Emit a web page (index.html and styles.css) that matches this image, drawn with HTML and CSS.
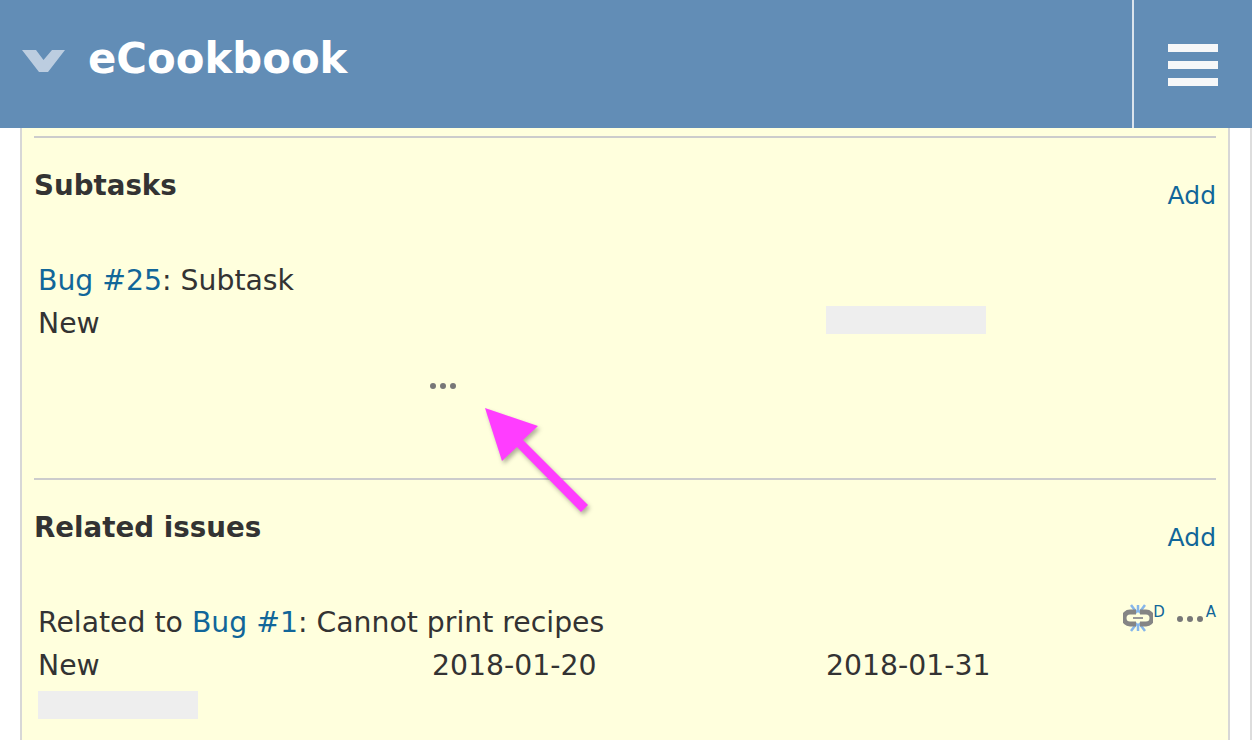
FILE: index.html
```html
<!DOCTYPE html>
<html lang="en">
<head>
  <meta charset="UTF-8" />
  <title>eCookbook</title>
  <link rel="stylesheet" href="styles.css">
</head>
<body>

<header class="top-bar">
  <div class="brand">
    <svg class="chevron" width="44" height="22" viewBox="0 0 44 22">
      <polygon points="0,0 14,0 21.5,10 30,0 43,0 26,22 17,22" fill="#bccde0"/>
    </svg>
    <h1>eCookbook</h1>
  </div>
  <a class="menu-btn" href="#">
    <span></span>
    <span></span>
    <span></span>
  </a>
</header>

<div class="page">
  <main class="issue">
    <section class="block subtasks">
      <div class="block-head">
        <h3>Subtasks</h3>
        <a class="add" href="#">Add</a>
      </div>
      <div class="line"><a href="#">Bug #25</a>: Subtask</div>
      <div class="cols">
        <div>New</div>
        <div></div>
        <div><span class="blank"></span></div>
      </div>
      <div class="cols more-row">
        <div></div>
        <div>
          <svg class="dots" width="28" height="8" viewBox="0 0 28 8">
            <circle cx="4" cy="4" r="3" fill="#777"/>
            <circle cx="14" cy="4" r="3" fill="#777"/>
            <circle cx="24" cy="4" r="3" fill="#777"/>
          </svg>
        </div>
      </div>
    </section>

    <section class="block">
      <div class="block-head">
        <h3>Related issues</h3>
        <a class="add" href="#">Add</a>
      </div>
      <div class="line-wrap">
        <div class="line">Related to <a href="#">Bug #1</a>: Cannot print recipes</div>
        <div class="row-tools">
          <svg class="unlink" width="30" height="28" viewBox="0 0 30 28">
            <path d="M8 1l6 8M22 1l-6 8M8 27l6-8M22 27l-6-8M15 1v7M15 27v-7" stroke="#86b6ea" stroke-width="2.5" fill="none"/>
            <path d="M13 8H7a6 6 0 0 0 0 12h6M17 8h6a6 6 0 0 1 0 12h-6" stroke="#858585" stroke-width="5" fill="none"/>
            <path d="M10 14h10" stroke="#999" stroke-width="2" fill="none"/>
          </svg>
          <a class="tool-letter" href="#">D</a>
          <svg class="tool-dots" width="28" height="8" viewBox="0 0 28 8">
            <circle cx="4" cy="4" r="3" fill="#777"/>
            <circle cx="14" cy="4" r="3" fill="#777"/>
            <circle cx="24" cy="4" r="3" fill="#777"/>
          </svg>
          <a class="tool-letter" href="#">A</a>
        </div>
      </div>
      <div class="cols">
        <div>New</div>
        <div>2018-01-20</div>
        <div>2018-01-31</div>
      </div>
      <div class="blank-row"><span class="blank"></span></div>
    </section>
  </main>
</div>

<svg class="arrow" width="120" height="120" viewBox="0 0 120 120">
  <polygon points="5,8 58,26 43,40 108,105 101,112 37,47 22,61" fill="#ff3dff"/>
</svg>

</body>
</html>
```

FILE: styles.css
```css
body {
  margin: 0;
  height: 740px;
  overflow: hidden;
  background: #fff;
  color: #333;
  font-family: 'DejaVu Sans', sans-serif;
  font-size: 28.3px;
}

a {
  color: #169;
  text-decoration: none;
}

.top-bar {
  display: flex;
  justify-content: space-between;
  height: 128px;
  background: #628db6;
}

.brand {
  display: flex;
  align-items: flex-start;
  padding-left: 22px;
}

.chevron {
  margin-top: 50px;
}

.brand h1 {
  margin: 33px 0 0 22px;
  color: #fff;
  font-size: 41.8px;
  line-height: 52px;
  font-weight: bold;
}

.menu-btn {
  display: flex;
  flex-direction: column;
  gap: 9px;
  box-sizing: border-box;
  width: 120px;
  padding: 44px 34px 0 34px;
  border-left: 2px solid #dbe4ed;
}

.menu-btn span {
  display: block;
  height: 8px;
  background: #f6f7f8;
}

.page {
  padding: 0 20px;
  border-right: 2px solid #ddd;
}

.issue {
  box-sizing: border-box;
  height: 612px;
  padding: 8px 12px 0 12px;
  background: #ffd;
  border-left: 2px solid #d7d7d7;
  border-right: 2px solid #d7d7d7;
}

.block {
  border-top: 2px solid #ccc;
}

.subtasks {
  height: 340px;
}

.block-head {
  display: flex;
  justify-content: space-between;
  height: 121px;
}

.block-head h3 {
  margin: 29px 0 0 0;
  font-size: 27.7px;
  line-height: 38px;
  font-weight: bold;
}

.add {
  margin-top: 39px;
  font-size: 25px;
  line-height: 38px;
}

.line {
  padding-left: 4px;
  line-height: 43px;
  height: 43px;
}

.line-wrap {
  display: flex;
  justify-content: space-between;
}

.cols {
  display: grid;
  grid-template-columns: 394px 394px 1fr;
  padding-left: 4px;
  line-height: 43px;
}

.blank {
  display: block;
  width: 160px;
  height: 28px;
  margin: 4px 0 0 0;
  background: #eee;
}

.blank-row {
  padding-left: 4px;
}

.more-row {
  margin-top: 20px;
  line-height: 20px;
}

.dots {
  display: block;
  margin: 17px 0 0 -3px;
}

.row-tools {
  display: flex;
  align-items: flex-start;
  height: 43px;
}

.unlink {
  margin-top: 3px;
  filter: blur(0.5px);
}

.tool-letter {
  font-size: 15px;
  line-height: 16px;
  margin-top: 3px;
}

.tool-dots {
  margin: 14px 2px 0 11px;
}

.arrow {
  position: absolute;
  left: 480px;
  top: 400px;
  filter: drop-shadow(2px 3px 2px rgba(0, 0, 0, 0.3));
}
```
